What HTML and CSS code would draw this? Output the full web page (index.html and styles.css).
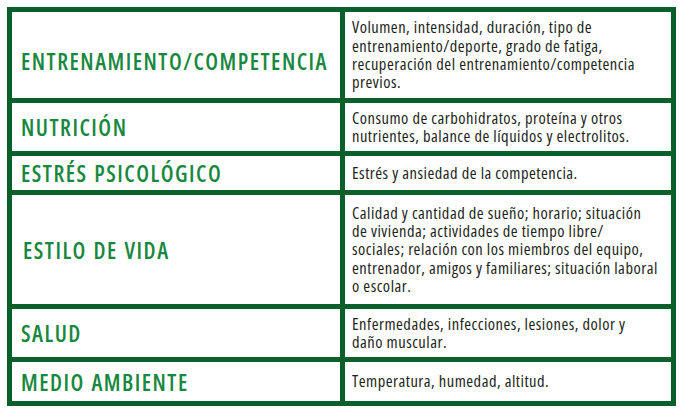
FILE: index.html
```html
<!DOCTYPE html>
<html lang="es">
<head>
<meta charset="utf-8">
<title>Factores</title>
<link rel="stylesheet" href="styles.css">
</head>
<body>
<div class="grid">
  <div class="cell label label-low">ENTRENAMIENTO/COMPETENCIA</div>
  <div class="cell desc">Volumen, intensidad, duración, tipo de<br>entrenamiento/deporte, grado de fatiga,<br>recuperación del entrenamiento/competencia<br>previos.</div>

  <div class="cell label">NUTRICIÓN</div>
  <div class="cell desc">Consumo de carbohidratos, proteína y otros<br>nutrientes, balance de líquidos y electrolitos.</div>

  <div class="cell label">ESTRÉS PSICOLÓGICO</div>
  <div class="cell desc">Estrés y ansiedad de la competencia.</div>

  <div class="cell label label-indent">ESTILO DE VIDA</div>
  <div class="cell desc">Calidad y cantidad de sueño; horario; situación<br>de vivienda; actividades de tiempo libre/<br>sociales; relación con los miembros del equipo,<br>entrenador, amigos y familiares; situación laboral<br>o escolar.</div>

  <div class="cell label">SALUD</div>
  <div class="cell desc">Enfermedades, infecciones, lesiones, dolor y<br>daño muscular.</div>

  <div class="cell label">MEDIO AMBIENTE</div>
  <div class="cell desc">Temperatura, humedad, altitud.</div>
</div>
</body>
</html>
```
FILE: styles.css
```css
html, body {
  margin: 0;
  padding: 0;
  background: #ffffff;
}
body {
  padding: 7px;
}
.grid {
  display: grid;
  grid-template-columns: 328px 326px;
  grid-template-rows: 86px 48px 34px 109px 48px 39px;
  gap: 5px;
  padding: 5px;
  background: #0a5f2b;
  width: max-content;
}
.cell {
  background: #ffffff;
  display: flex;
  align-items: center;
  overflow: hidden;
}
.label {
  padding-left: 9px;
  padding-top: 2px;
  font-family: "Open Sans", "DejaVu Sans Condensed", sans-serif;
  font-stretch: 75%;
  font-weight: 600;
  font-size: 22.5px;
  line-height: 26px;
  letter-spacing: 1.5px;
  word-spacing: 1px;
  color: #18883f;
  white-space: nowrap;
}
.label-low {
  padding-top: 14px;
}
.label-indent {
  padding-left: 11px;
}
.desc {
  padding-left: 7px;
  font-family: "Open Sans", "DejaVu Sans Condensed", sans-serif;
  font-stretch: 75%;
  font-size: 16.5px;
  line-height: 18.3px;
  letter-spacing: 0.5px;
  color: #231f20;
  white-space: nowrap;
}
```
